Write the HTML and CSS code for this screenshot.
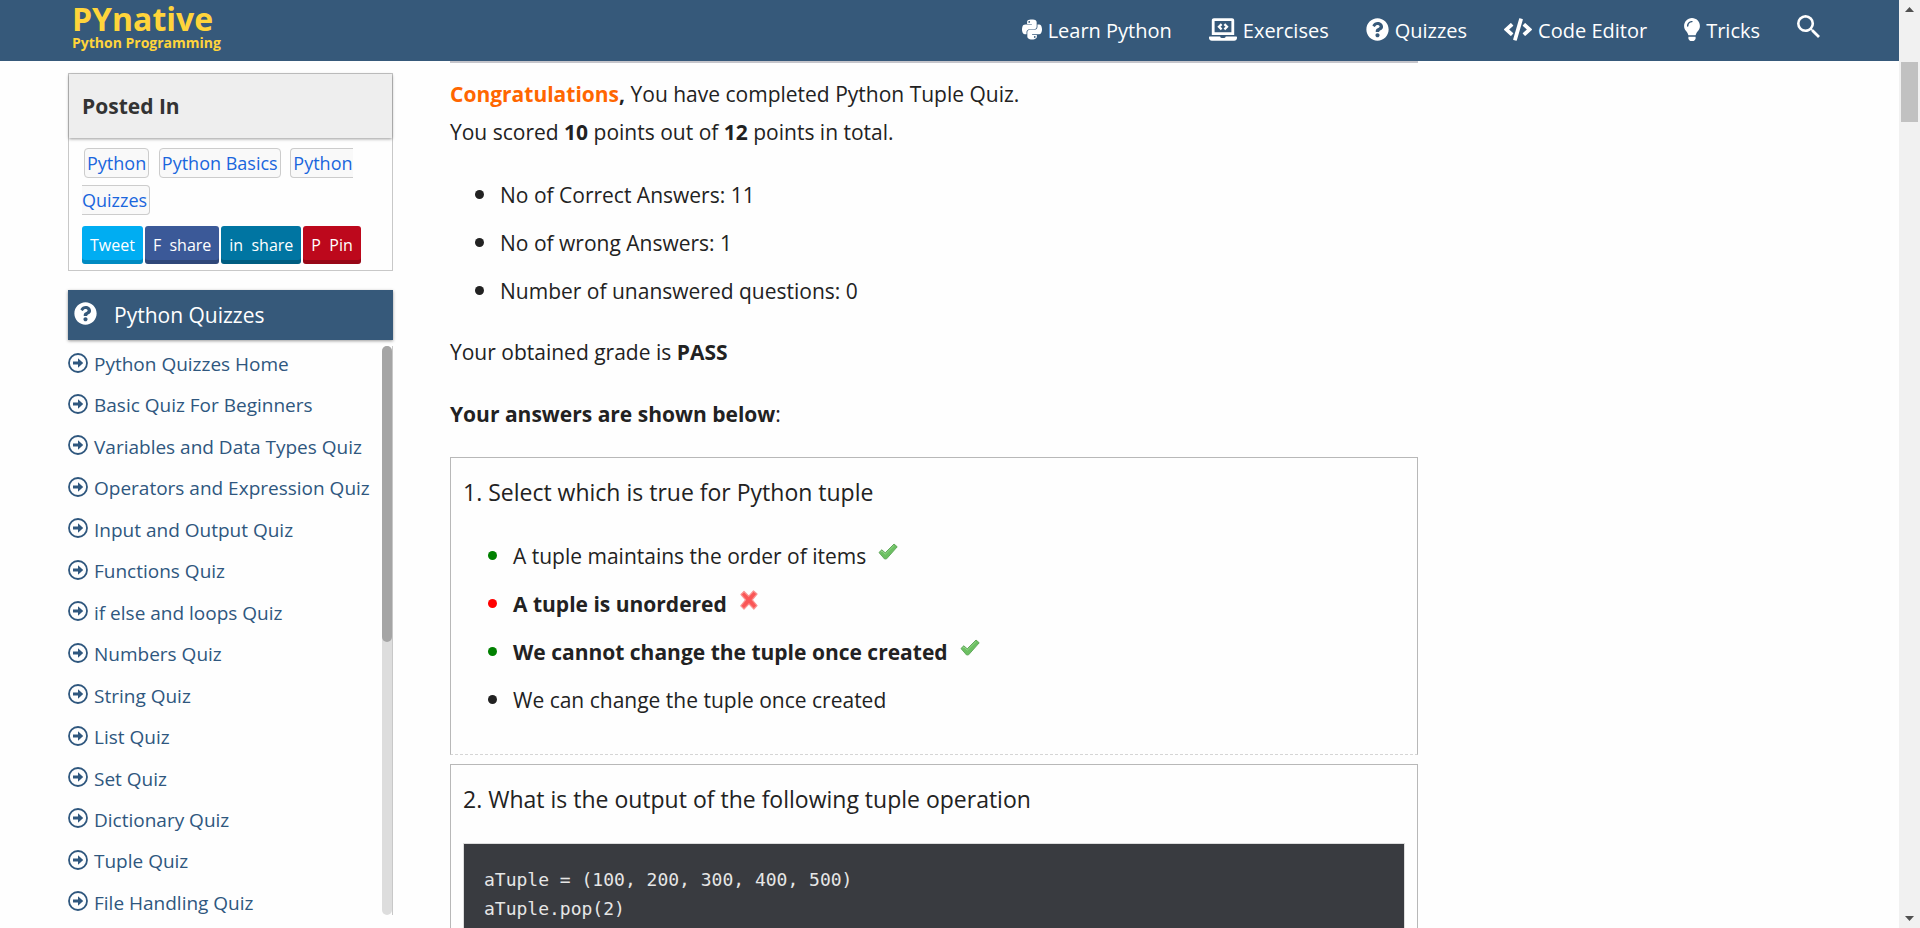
FILE: index.html
```html
<!DOCTYPE html>
<html lang="en">
<head>
<meta charset="utf-8">
<title>Python Tuple Quiz – PYnative</title>
<link rel="stylesheet" href="styles.css">
</head>
<body>
<svg class="sprite" aria-hidden="true">
  <symbol id="i-python" viewBox="0 0 448 512"><path d="M439.8 200.5c-7.7-30.9-22.3-54.2-53.4-54.2h-40.1v47.4c0 36.8-31.2 67.8-66.8 67.8H172.7c-29.2 0-53.4 25-53.4 54.3v101.8c0 29 25.2 46 53.4 54.3 33.8 9.9 66.3 11.7 106.8 0 26.9-7.8 53.4-23.5 53.4-54.3v-40.7H226.2v-13.6h160.2c31.1 0 42.6-21.7 53.4-54.2 11.2-33.5 10.7-65.7 0-108.6zM286.2 404c11.1 0 20.1 9.1 20.1 20.3 0 11.3-9 20.4-20.1 20.4-11 0-20.1-9.2-20.1-20.4.1-11.3 9.1-20.3 20.1-20.3zM167.8 248.1h106.8c29.7 0 53.4-24.5 53.4-54.3V91.9c0-29-24.4-50.7-53.4-55.6-35.8-5.9-74.7-5.6-106.8.1-45.2 8-53.4 24.7-53.4 55.6v40.7h106.9v13.6h-147c-31.1 0-58.3 18.7-66.8 54.2-9.8 40.7-10.2 66.1 0 108.6 7.6 31.6 25.7 54.2 56.8 54.2H101v-48.8c0-35.3 30.5-66.4 66.8-66.4zm-6.7-142.6c-11.1 0-20.1-9.1-20.1-20.3.1-11.3 9-20.4 20.1-20.4 11 0 20.1 9.2 20.1 20.4s-9 20.3-20.1 20.3z"/></symbol>
  <symbol id="i-laptop" viewBox="0 0 640 512"><path d="M624 416H381.5c-.7 19.8-14.7 32-32.7 32H288c-18.7 0-33-17.5-32.8-32H16c-8.8 0-16 7.2-16 16v16c0 35.200 28.800 64 64 64h512c35.200 0 64-28.800 64-64v-16c0-8.800-7.200-16-16-16zM576 48c0-26.400-21.600-48-48-48H112C85.600 0 64 21.600 64 48v336h512V48zm-64 272H128V64h384v256z"/><path d="M288 132l-60 60 60 60M352 132l60 60-60 60" fill="none" stroke="currentColor" stroke-width="52"/></symbol>
  <symbol id="i-question" viewBox="0 0 512 512"><path d="M504 256c0 136.997-111.043 248-248 248S8 392.997 8 256C8 119.083 119.043 8 256 8s248 111.083 248 248zM262.655 90c-54.497 0-89.255 22.957-116.549 63.758-3.536 5.286-2.353 12.415 2.715 16.258l34.699 26.31c5.205 3.947 12.621 3.008 16.665-2.122 17.864-22.658 30.113-35.797 57.303-35.797 20.429 0 45.698 13.148 45.698 32.958 0 14.976-12.363 22.667-32.534 33.976C247.128 238.528 216 254.941 216 296v4c0 6.627 5.373 12 12 12h56c6.627 0 12-5.373 12-12v-1.333c0-28.462 83.186-29.647 83.186-106.667 0-58.002-60.165-102-116.531-102zM256 338c-25.365 0-46 20.635-46 46 0 25.364 20.635 46 46 46s46-20.636 46-46c0-25.365-20.635-46-46-46z"/></symbol>
  <symbol id="i-code" viewBox="0 0 640 512"><path d="M278.900 511.500l-61-17.700c-6.400-1.800-10-8.500-8.200-14.900L346.200 8.700c1.800-6.400 8.500-10 14.900-8.200l61 17.700c6.400 1.800 10 8.500 8.200 14.900L293.800 503.300c-1.900 6.400-8.500 10.100-14.900 8.200zm-114-112.200l43.500-46.400c4.600-4.900 4.300-12.700-.8-17.200L117 256l90.600-79.700c5.100-4.500 5.500-12.300.8-17.200l-43.500-46.400c-4.500-4.800-12.100-5.100-17-.5L3.800 247.200c-5.100 4.700-5.100 12.800 0 17.500l144.100 135.100c4.900 4.600 12.500 4.400 17-.5zm327.200.6l144.100-135.100c5.100-4.700 5.100-12.800 0-17.500L492.100 112.100c-4.800-4.500-12.400-4.300-17 .5L431.600 159c-4.600 4.900-4.300 12.700.8 17.200L523 256l-90.600 79.700c-5.100 4.500-5.500 12.300-.8 17.200l43.500 46.400c4.500 4.900 12.100 5.100 17 .6z"/></symbol>
  <symbol id="i-bulb" viewBox="0 0 352 512"><path d="M96.060 454.350c.01 6.290 1.870 12.450 5.360 17.690l17.090 25.690a31.990 31.990 0 0 0 26.640 14.280h61.710a31.990 31.990 0 0 0 26.640-14.280l17.090-25.690a31.989 31.989 0 0 0 5.360-17.690l.04-38.350H96.010l.05 38.350zM0 176c0 44.370 16.450 84.850 43.560 115.780 16.520 18.850 42.360 58.230 52.210 91.450.04.26.07.52.11.78h160.240c.04-.26.07-.51.11-.78 9.850-33.220 35.690-72.600 52.210-91.450C335.550 260.850 352 220.370 352 176 352 78.610 272.910-.3 175.450 0 73.440.310 0 82.970 0 176zm176-80c-44.110 0-80 35.890-80 80 0 8.840-7.160 16-16 16s-16-7.160-16-16c0-61.760 50.240-112 112-112 8.840 0 16 7.160 16 16s-7.160 16-16 16z"/></symbol>
  <symbol id="i-search" viewBox="3 3 17.500 17.500"><path d="M15.500 14h-.79l-.28-.27A6.471 6.471 0 0 0 16 9.500 6.500 6.500 0 1 0 9.500 16c1.610 0 3.090-.59 4.230-1.570l.27.28v.79l5 4.990L20.490 19l-4.990-5zm-6 0C7.010 14 5 11.990 5 9.500S7.010 5 9.500 5 14 7.010 14 9.500 11.990 14 9.500 14z"/></symbol>
  <symbol id="i-arrow" viewBox="0 0 20 20"><circle cx="10" cy="10" r="9" fill="none" stroke="currentColor" stroke-width="1.800"/><path d="M5 8.500h5V5.200L15.200 10 10 14.800v-3.300H5z"/></symbol>
  <symbol id="i-check" viewBox="0 0 20 20"><path d="M1 10.500L3.800 7.800 7.200 10.800 16 2 19.200 4.800 8.600 16.800 6.600 17z" fill="#6cc062" stroke="#62a85c" stroke-width="1" stroke-linejoin="round"/><path d="M2.800 10.200l1.200-1.100 3.300 3L16.100 3.400" fill="none" stroke="#92d489" stroke-width="1"/></symbol>
  <symbol id="i-cross" viewBox="0 0 20 20"><path d="M2 4.500L5 1.500 9.800 6.200 14.500 1 18 4 13.200 9.800 18 15.600 14.800 19 10 13.800 5 19 1.800 15.800 6.600 9.800z" fill="#fa5656" stroke="#fa9391" stroke-width="1.200" stroke-linejoin="round"/></symbol>
</svg>

<div class="page">
  <header class="topbar">
    <a class="brand" href="#"><span class="brand-name">PYnative</span><span class="brand-tag">Python Programming</span></a>
    <nav class="nav">
      <a href="#"><svg class="ico ico-python"><use href="#i-python"/></svg>Learn Python</a>
      <a href="#"><svg class="ico ico-wide"><use href="#i-laptop"/></svg>Exercises</a>
      <a href="#"><svg class="ico"><use href="#i-question"/></svg>Quizzes</a>
      <a href="#"><svg class="ico ico-wide"><use href="#i-code"/></svg>Code Editor</a>
      <a href="#"><svg class="ico ico-bulb"><use href="#i-bulb"/></svg>Tricks</a>
      <button class="search" type="button" aria-label="Search"><svg class="ico"><use href="#i-search"/></svg></button>
    </nav>
  </header>

  <div class="columns">
    <aside class="sidebar">
      <section class="posted">
        <h2>Posted In</h2>
        <div class="posted-body">
          <p class="tags"><a href="#">Python</a> <a href="#">Python Basics</a> <a href="#">Python Quizzes</a></p>
          <div class="share">
            <a class="tweet" href="#">Tweet</a>
            <a class="facebook" href="#">F&nbsp; share</a>
            <a class="linkedin" href="#">in&nbsp; share</a>
            <a class="pin" href="#">P&nbsp; Pin</a>
          </div>
        </div>
      </section>
      <section class="quizzes">
        <h2><svg class="ico"><use href="#i-question"/></svg>Python Quizzes</h2>
        <div class="scroller">
          <ul>
            <li><a href="#"><svg><use href="#i-arrow"/></svg>Python Quizzes Home</a></li>
            <li><a href="#"><svg><use href="#i-arrow"/></svg>Basic Quiz For Beginners</a></li>
            <li><a href="#"><svg><use href="#i-arrow"/></svg>Variables and Data Types Quiz</a></li>
            <li><a href="#"><svg><use href="#i-arrow"/></svg>Operators and Expression Quiz</a></li>
            <li><a href="#"><svg><use href="#i-arrow"/></svg>Input and Output Quiz</a></li>
            <li><a href="#"><svg><use href="#i-arrow"/></svg>Functions Quiz</a></li>
            <li><a href="#"><svg><use href="#i-arrow"/></svg>if else and loops Quiz</a></li>
            <li><a href="#"><svg><use href="#i-arrow"/></svg>Numbers Quiz</a></li>
            <li><a href="#"><svg><use href="#i-arrow"/></svg>String Quiz</a></li>
            <li><a href="#"><svg><use href="#i-arrow"/></svg>List Quiz</a></li>
            <li><a href="#"><svg><use href="#i-arrow"/></svg>Set Quiz</a></li>
            <li><a href="#"><svg><use href="#i-arrow"/></svg>Dictionary Quiz</a></li>
            <li><a href="#"><svg><use href="#i-arrow"/></svg>Tuple Quiz</a></li>
            <li><a href="#"><svg><use href="#i-arrow"/></svg>File Handling Quiz</a></li>
          </ul>
          <div class="track"><div class="thumb"></div></div>
        </div>
      </section>
    </aside>

    <main class="results">
      <p><strong><span class="congrats">Congratulations</span>,</strong> You have completed Python Tuple Quiz.<br>You scored <strong>10</strong> points out of <strong>12</strong> points in total.</p>
      <ul class="list">
        <li>No of Correct Answers: 11</li>
        <li>No of wrong Answers: 1</li>
        <li>Number of unanswered questions: 0</li>
      </ul>
      <p>Your obtained grade is <strong>PASS</strong></p>
      <p><strong>Your answers are shown below</strong>:</p>

      <section class="question">
        <h3>1. Select which is true for Python tuple</h3>
        <ul class="list">
          <li class="right">A tuple maintains the order of items<svg class="mark"><use href="#i-check"/></svg></li>
          <li class="wrong"><strong>A tuple is unordered</strong><svg class="mark"><use href="#i-cross"/></svg></li>
          <li class="right"><strong>We cannot change the tuple once created</strong><svg class="mark"><use href="#i-check"/></svg></li>
          <li>We can change the tuple once created</li>
        </ul>
      </section>
      <section class="question">
        <h3>2. What is the output of the following tuple operation</h3>
        <pre><code>aTuple = (100, 200, 300, 400, 500)
aTuple.pop(2)</code></pre>
      </section>
    </main>
  </div>
</div>

<div class="page-scroll">
  <svg viewBox="0 0 9 5"><path d="M0 5L4.500 0 9 5z"/></svg>
  <div class="page-thumb"></div>
  <svg class="down" viewBox="0 0 9 5"><path d="M0 0h9L4.500 5z"/></svg>
</div>
</body>
</html>
```

FILE: styles.css
```css
* { box-sizing: border-box; }

body {
  margin: 0;
  height: 100vh;
  overflow: hidden;
  display: grid;
  grid-template-columns: minmax(0, 1fr) 21px;
  background: #fefefe;
  color: #222;
  font: 21px/38px "Open Sans", "Noto Sans", sans-serif;
}

a { text-decoration: none; }
h2, h3, p, ul, pre { margin: 0; padding: 0; }
svg { fill: currentColor; }
.sprite { position: absolute; width: 0; height: 0; }

.page {
  height: 100vh;
  overflow: hidden;
}

/* Top bar */
.topbar {
  height: 61px;
  padding: 0 79px 0 72px;
  display: flex;
  justify-content: space-between;
  background: #36597a;
  color: #fff;
}
.brand {
  display: flex;
  flex-direction: column;
  padding-top: 2px;
  color: #ffd43b;
  font-weight: 700;
}
.brand-name { font-size: 32px; line-height: 34px; }
.brand-tag { font-size: 14px; line-height: 14px; }
.nav {
  display: flex;
  align-items: center;
  gap: 37px;
  font-size: 20px;
}
.nav a {
  display: flex;
  align-items: center;
  gap: 6px;
  color: #fff;
}
.ico { width: 23px; height: 23px; flex: none; }
.nav a .ico { margin-bottom: 3px; }
.nav .ico-python { width: 20px; }
.nav .ico-wide { width: 28px; }
.nav .ico-bulb { width: 16px; }
.search {
  display: flex;
  margin: 0 0 8px;
  padding: 0;
  border: 0;
  background: none;
  color: #fff;
}

/* Two-column body */
.columns {
  padding-left: 68px;
  display: grid;
  grid-template-columns: 325px minmax(0, 968px);
  gap: 57px;
}

.sidebar { padding-top: 12px; }
.sidebar h2 { box-shadow: 0 1px 3px rgba(0, 0, 0, 0.4); }
.posted {
  border: 1px solid #c8c8c8;
  margin-bottom: 19px;
}
.posted h2 {
  padding: 13px;
  background: #eee;
  color: #333;
  font-size: 21px;
}
.posted-body { padding: 7px 13px 6px; }
.tags { font-size: 18px; line-height: 37px; }
.tags a {
  margin: 0 3px 0 2px;
  padding: 2px;
  border: 1px solid #ccc;
  border-radius: 4px;
  background: #f9f9f9;
  color: #1a66dd;
}
.share {
  display: flex;
  gap: 2px;
  padding-top: 7px;
}
.share a {
  padding: 0 8px;
  border-radius: 3px;
  box-shadow: inset 0 -4px 0 rgba(0, 0, 0, 0.2);
  color: #fff;
  font-size: 16px;
}
.tweet { background: #00adf2; }
.facebook { background: #3b5998; }
.linkedin { background: #0075a2; }
.pin { background: #bd081c; }

.quizzes h2 {
  height: 50px;
  padding: 0 6px;
  display: flex;
  align-items: center;
  gap: 17px;
  background: #36597a;
  color: #fff;
  font-size: 21px;
  font-weight: 400;
}
.quizzes h2 .ico { margin-bottom: 4px; }
.scroller {
  height: calc(100vh - 359px);
  margin-top: 6px;
  display: flex;
  justify-content: space-between;
  border-right: 1px solid #c8c8c8;
}
.scroller ul {
  padding-top: 6px;
  display: flex;
  flex-direction: column;
  justify-content: space-between;
  list-style: none;
  line-height: 24px;
  font-size: 19px;
}
.scroller a {
  display: flex;
  align-items: center;
  gap: 6px;
  color: #2f577e;
}
.scroller a svg { width: 20px; height: 20px; margin-bottom: 3px; }
.track { width: 10px; border-radius: 5px; background: #ddd; }
.thumb { height: 52%; border-radius: 5px; background: #a5a5a5; }

/* Quiz results */
.results {
  border-top: 2px solid #c5c5cb;
  padding-top: 12px;
}
.results p { margin-bottom: 24px; }
.congrats { color: #ff6600; }
.list { padding-left: 50px; margin-bottom: 24px; line-height: 36px; }
.list li { margin-bottom: 10px; }
.list li:last-child { margin-bottom: 0; }
.list li::marker { font-size: 26px; }
.list .right::marker { color: green; }
.list .wrong::marker { color: red; }
.mark { width: 20px; height: 20px; margin: 0 0 2px 12px; }

.question {
  margin-bottom: 9px;
  padding: 15px 12px 12px;
  border: 1px solid #b8b8b8;
  border-bottom: 1px dashed #d5d5d5;
}
.question h3 {
  margin-bottom: 25px;
  font-size: 23px;
  font-weight: 400;
}
pre {
  padding: 21px 20px;
  border: 1px solid #ddd;
  background: #393b40;
  color: #e6e6e6;
  font: 18px/29px "DejaVu Sans Mono", monospace;
}
code { font: inherit; }

/* Window scrollbar */
.page-scroll {
  display: flex;
  flex-direction: column;
  align-items: center;
  padding: 7px 2px;
  background: #f1f1f1;
  color: #505050;
}
.page-scroll svg { width: 9px; height: 5px; }
.page-thumb {
  align-self: stretch;
  height: 60px;
  margin-top: 50px;
  background: #c1c1c1;
}
.down { margin-top: auto; }
```
